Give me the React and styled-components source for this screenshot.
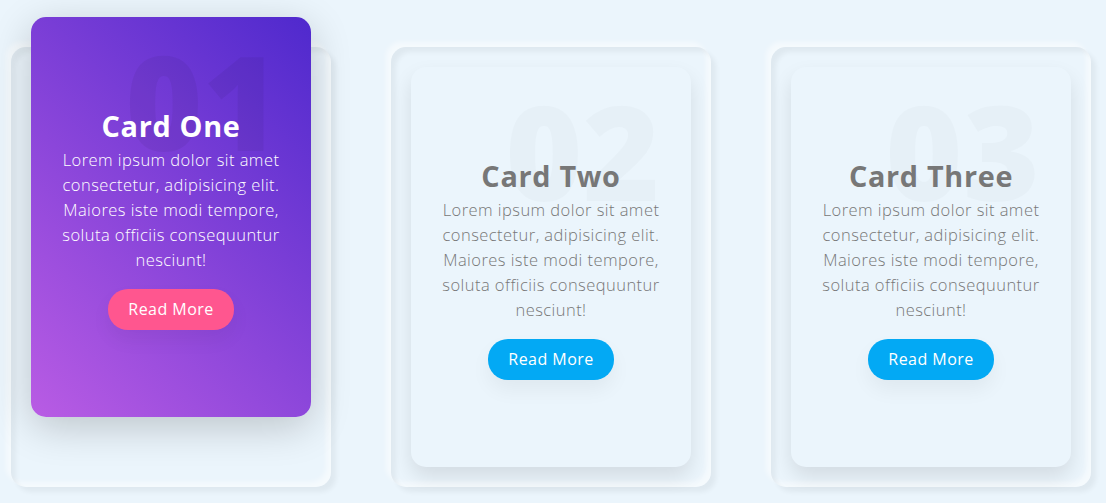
import React from 'react'
import styled, { createGlobalStyle, css } from 'styled-components'

const GlobalStyle = createGlobalStyle`
  * { margin: 0; padding: 0; box-sizing: border-box; }
  body {
    background: #ebf5fc;
    font-family: "Open Sans", "Noto Sans", sans-serif;
    overflow: hidden;
  }
`

const Container = styled.div`
  display: flex;
  gap: 60px;
  padding: 47px 0 0 11px;
  height: 503px;
`

const Card = styled.div`
  width: 320px;
  height: 440px;
  flex-shrink: 0;
  padding: 20px;
  border-radius: 15px;
  box-shadow: inset 5px 5px 5px rgba(0, 0, 0, 0.05),
    inset -5px -5px 5px rgba(255, 255, 255, 0.5),
    5px 5px 5px rgba(0, 0, 0, 0.05),
    -5px -5px 5px rgba(255, 255, 255, 0.5);
`

const Box = styled.div`
  position: relative;
  height: 100%;
  border-radius: 15px;
  background: #ebf5fc;
  box-shadow: 0 10px 20px rgba(0, 0, 0, 0.1);
  display: flex;
  justify-content: center;
  align-items: center;
  ${p => p.$active && css`
    transform: translateY(-50px);
    background: linear-gradient(45deg, #b95ce4, #4f29cd);
    box-shadow: 0 10px 40px rgba(0, 0, 0, 0.2);
  `}
`

const Content = styled.div`
  padding: 20px;
  text-align: center;
`

const Number = styled.h2`
  position: absolute;
  top: -13px;
  right: 31px;
  font-size: 132px;
  font-weight: 800;
  line-height: 192px;
  color: ${p => (p.$active ? 'rgba(0, 0, 0, 0.05)' : 'rgba(0, 0, 0, 0.02)')};
  pointer-events: none;
`

const Title = styled.h3`
  position: relative;
  font-size: 28.8px;
  font-weight: 700;
  line-height: 43px;
  letter-spacing: 0.7px;
  color: ${p => (p.$active ? '#fff' : '#777')};
`

const Text = styled.p`
  position: relative;
  font-size: 16.5px;
  font-weight: 300;
  line-height: 25px;
  letter-spacing: 0.45px;
  color: ${p => (p.$active ? '#fff' : '#777')};
`

const Button = styled.a`
  position: relative;
  display: inline-block;
  margin-top: 17px;
  padding: 8px 20px;
  border-radius: 20px;
  font-size: 16px;
  line-height: 25px;
  letter-spacing: 0.45px;
  color: #fff;
  text-decoration: none;
  background: ${p => (p.$active ? '#ff568f' : '#03a9f4')};
  box-shadow: 0 10px 20px rgba(0, 0, 0, 0.05);
`

const cards = [
  { num: '01', title: 'Card One', active: true },
  { num: '02', title: 'Card Two' },
  { num: '03', title: 'Card Three' },
]

const lorem = 'Lorem ipsum dolor sit amet consectetur, adipisicing elit. Maiores iste modi tempore, soluta officiis consequuntur nesciunt!'

export default function App() {
  return (
    <>
      <GlobalStyle />
      <Container>
        {cards.map(c => (
          <Card key={c.num}>
            <Box $active={c.active}>
              <Content>
                <Number $active={c.active}>{c.num}</Number>
                <Title $active={c.active}>{c.title}</Title>
                <Text $active={c.active}>{lorem}</Text>
                <Button href="#" $active={c.active}>Read More</Button>
              </Content>
            </Box>
          </Card>
        ))}
      </Container>
    </>
  )
}
